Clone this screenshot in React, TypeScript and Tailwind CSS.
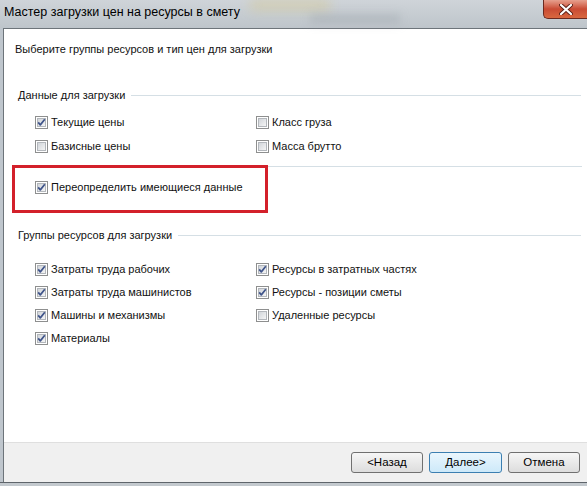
import React from 'react';

function CheckBox({ checked }: { checked?: boolean }) {
    return (
        <svg width="13" height="13" viewBox="0 0 13 13" className="shrink-0">
            <defs>
                <linearGradient id="cbFill" x1="0" y1="0" x2="1" y2="1">
                    <stop offset="0" stopColor="#cfd3d8" />
                    <stop offset="1" stopColor="#f7f7f7" />
                </linearGradient>
            </defs>
            <rect x="0.5" y="0.5" width="12" height="12" fill="#ffffff" stroke="#8e8f8f" />
            <rect x="2.5" y="2.5" width="8" height="8" fill="url(#cbFill)" stroke="#b3b7bc" />
            {checked && (
                <path d="M3.2 6.4 L5.3 8.9 L9.8 3.3" fill="none" stroke="#3f548a" strokeWidth="1.7" strokeLinejoin="round" />
            )}
        </svg>
    );
}

function Option({ label, checked }: { label: string; checked?: boolean }) {
    return (
        <div className="flex items-center gap-[3px]">
            <CheckBox checked={checked} />
            <span className="leading-none">{label}</span>
        </div>
    );
}

function GroupHeader({ title }: { title: string }) {
    return (
        <div className="flex items-center h-[16px] pl-[14px] pr-[6px]">
            <span>{title}</span>
            <div className="flex-1 h-px bg-[#d5dfe5] ml-[6px]"></div>
        </div>
    );
}

function WinButton({ label, primary }: { label: string; primary?: boolean }) {
    return (
        <button
            className={
                primary
                    ? 'w-[73px] h-[21px] rounded-[3px] border border-[#3c7fb1] bg-gradient-to-b from-[#eaf6fd] to-[#cde9f9] text-[11.5px] text-black leading-none'
                    : 'w-[72px] h-[21px] rounded-[3px] border border-[#707070] bg-gradient-to-b from-[#f6f6f6] to-[#dddddd] text-[11.5px] text-black leading-none'
            }
        >
            {label}
        </button>
    );
}

export default function App() {
    const data = [
        { label: 'Текущие цены', checked: true },
        { label: 'Класс груза' },
        { label: 'Базисные цены' },
        { label: 'Масса брутто' },
    ];

    const groups = [
        { label: 'Затраты труда рабочих', checked: true },
        { label: 'Ресурсы в затратных частях', checked: true },
        { label: 'Затраты труда машинистов', checked: true },
        { label: 'Ресурсы - позиции сметы', checked: true },
        { label: 'Машины и механизмы', checked: true },
        { label: 'Удаленные ресурсы' },
        { label: 'Материалы', checked: true },
    ];

    return (
        <div className="relative w-[587px] h-[486px] overflow-hidden flex flex-col bg-[#bfc6cd] text-[11px] text-[#111] font-['Liberation_Sans',Arial,sans-serif]">
            {/* Title bar */}
            <div className="relative h-[28px] shrink-0 bg-gradient-to-b from-[#cfd4d9] to-[#bec5cb]">
                <div className="absolute left-[250px] top-0 w-[80px] h-[10px] bg-[#d9c98a]/50 blur-[6px]"></div>
                <div className="absolute left-[310px] top-[14px] w-[90px] h-[10px] bg-[#9aa2aa]/40 blur-[4px]"></div>
                <div className="pl-[4px] pt-[6px] text-[12.5px] text-black leading-none">Мастер загрузки цен на ресурсы в смету</div>
                <div className="absolute right-0 top-0 w-[44px] h-[19px] rounded-bl-[5px] border border-t-0 border-r-0 border-[#6b2a20] bg-gradient-to-b from-[#e6a08e] via-[#c94b34] to-[#d8673f] flex items-center justify-center">
                    <svg width="14" height="11" viewBox="0 0 14 11">
                        <path d="M2 1 L12 10 M12 1 L2 10" stroke="#5a2016" strokeWidth="4" strokeLinecap="round" />
                        <path d="M2 1 L12 10 M12 1 L2 10" stroke="#ffffff" strokeWidth="2.2" strokeLinecap="round" />
                    </svg>
                </div>
            </div>

            {/* Window body */}
            <div className="flex-1 flex pl-[3px]">
                <div className="flex-1 flex flex-col border-t border-l border-[#6d747a] bg-white">
                    <div className="flex-1 flex flex-col">
                        <div className="mt-[12px] pl-[11px] h-[16px] flex items-center">Выберите группы ресурсов и тип цен для загрузки</div>

                        <div className="mt-[30px]">
                            <GroupHeader title="Данные для загрузки" />
                        </div>
                        <div className="mt-[7px] pl-[31px] grid grid-cols-[221px_1fr] auto-rows-[24px] items-center">
                            {data.map((d, i) => (
                                <Option key={i} label={d.label} checked={d.checked} />
                            ))}
                        </div>

                        <div className="mt-[8px] ml-[8px] mr-[5px] h-px bg-[#d5dfe5]"></div>

                        <div className="mt-[8px] pl-[31px] h-[24px] flex items-center">
                            <Option label="Переопределить имеющиеся данные" checked />
                        </div>

                        <div className="mt-[28px]">
                            <GroupHeader title="Группы ресурсов для загрузки" />
                        </div>
                        <div className="mt-[15px] pl-[31px] grid grid-cols-[221px_1fr] auto-rows-[23px] items-center">
                            {groups.map((g, i) => (
                                <Option key={i} label={g.label} checked={g.checked} />
                            ))}
                        </div>
                    </div>

                    {/* Footer */}
                    <div className="h-[40px] shrink-0 bg-[#f0f0f0] border-t border-[#dfdfdf] flex items-center justify-end gap-[6px] pr-[7px]">
                        <WinButton label="<Назад" />
                        <WinButton label="Далее>" primary />
                        <WinButton label="Отмена" />
                    </div>
                </div>
            </div>
            <div className="h-[4px] shrink-0 border-t border-[#5f656b] bg-[#c3c9ce]"></div>

            {/* Highlight annotation */}
            <div className="absolute left-[12px] top-[165px] w-[256px] h-[48px] border-[3px] border-[#d3202a]"></div>
        </div>
    );
}
